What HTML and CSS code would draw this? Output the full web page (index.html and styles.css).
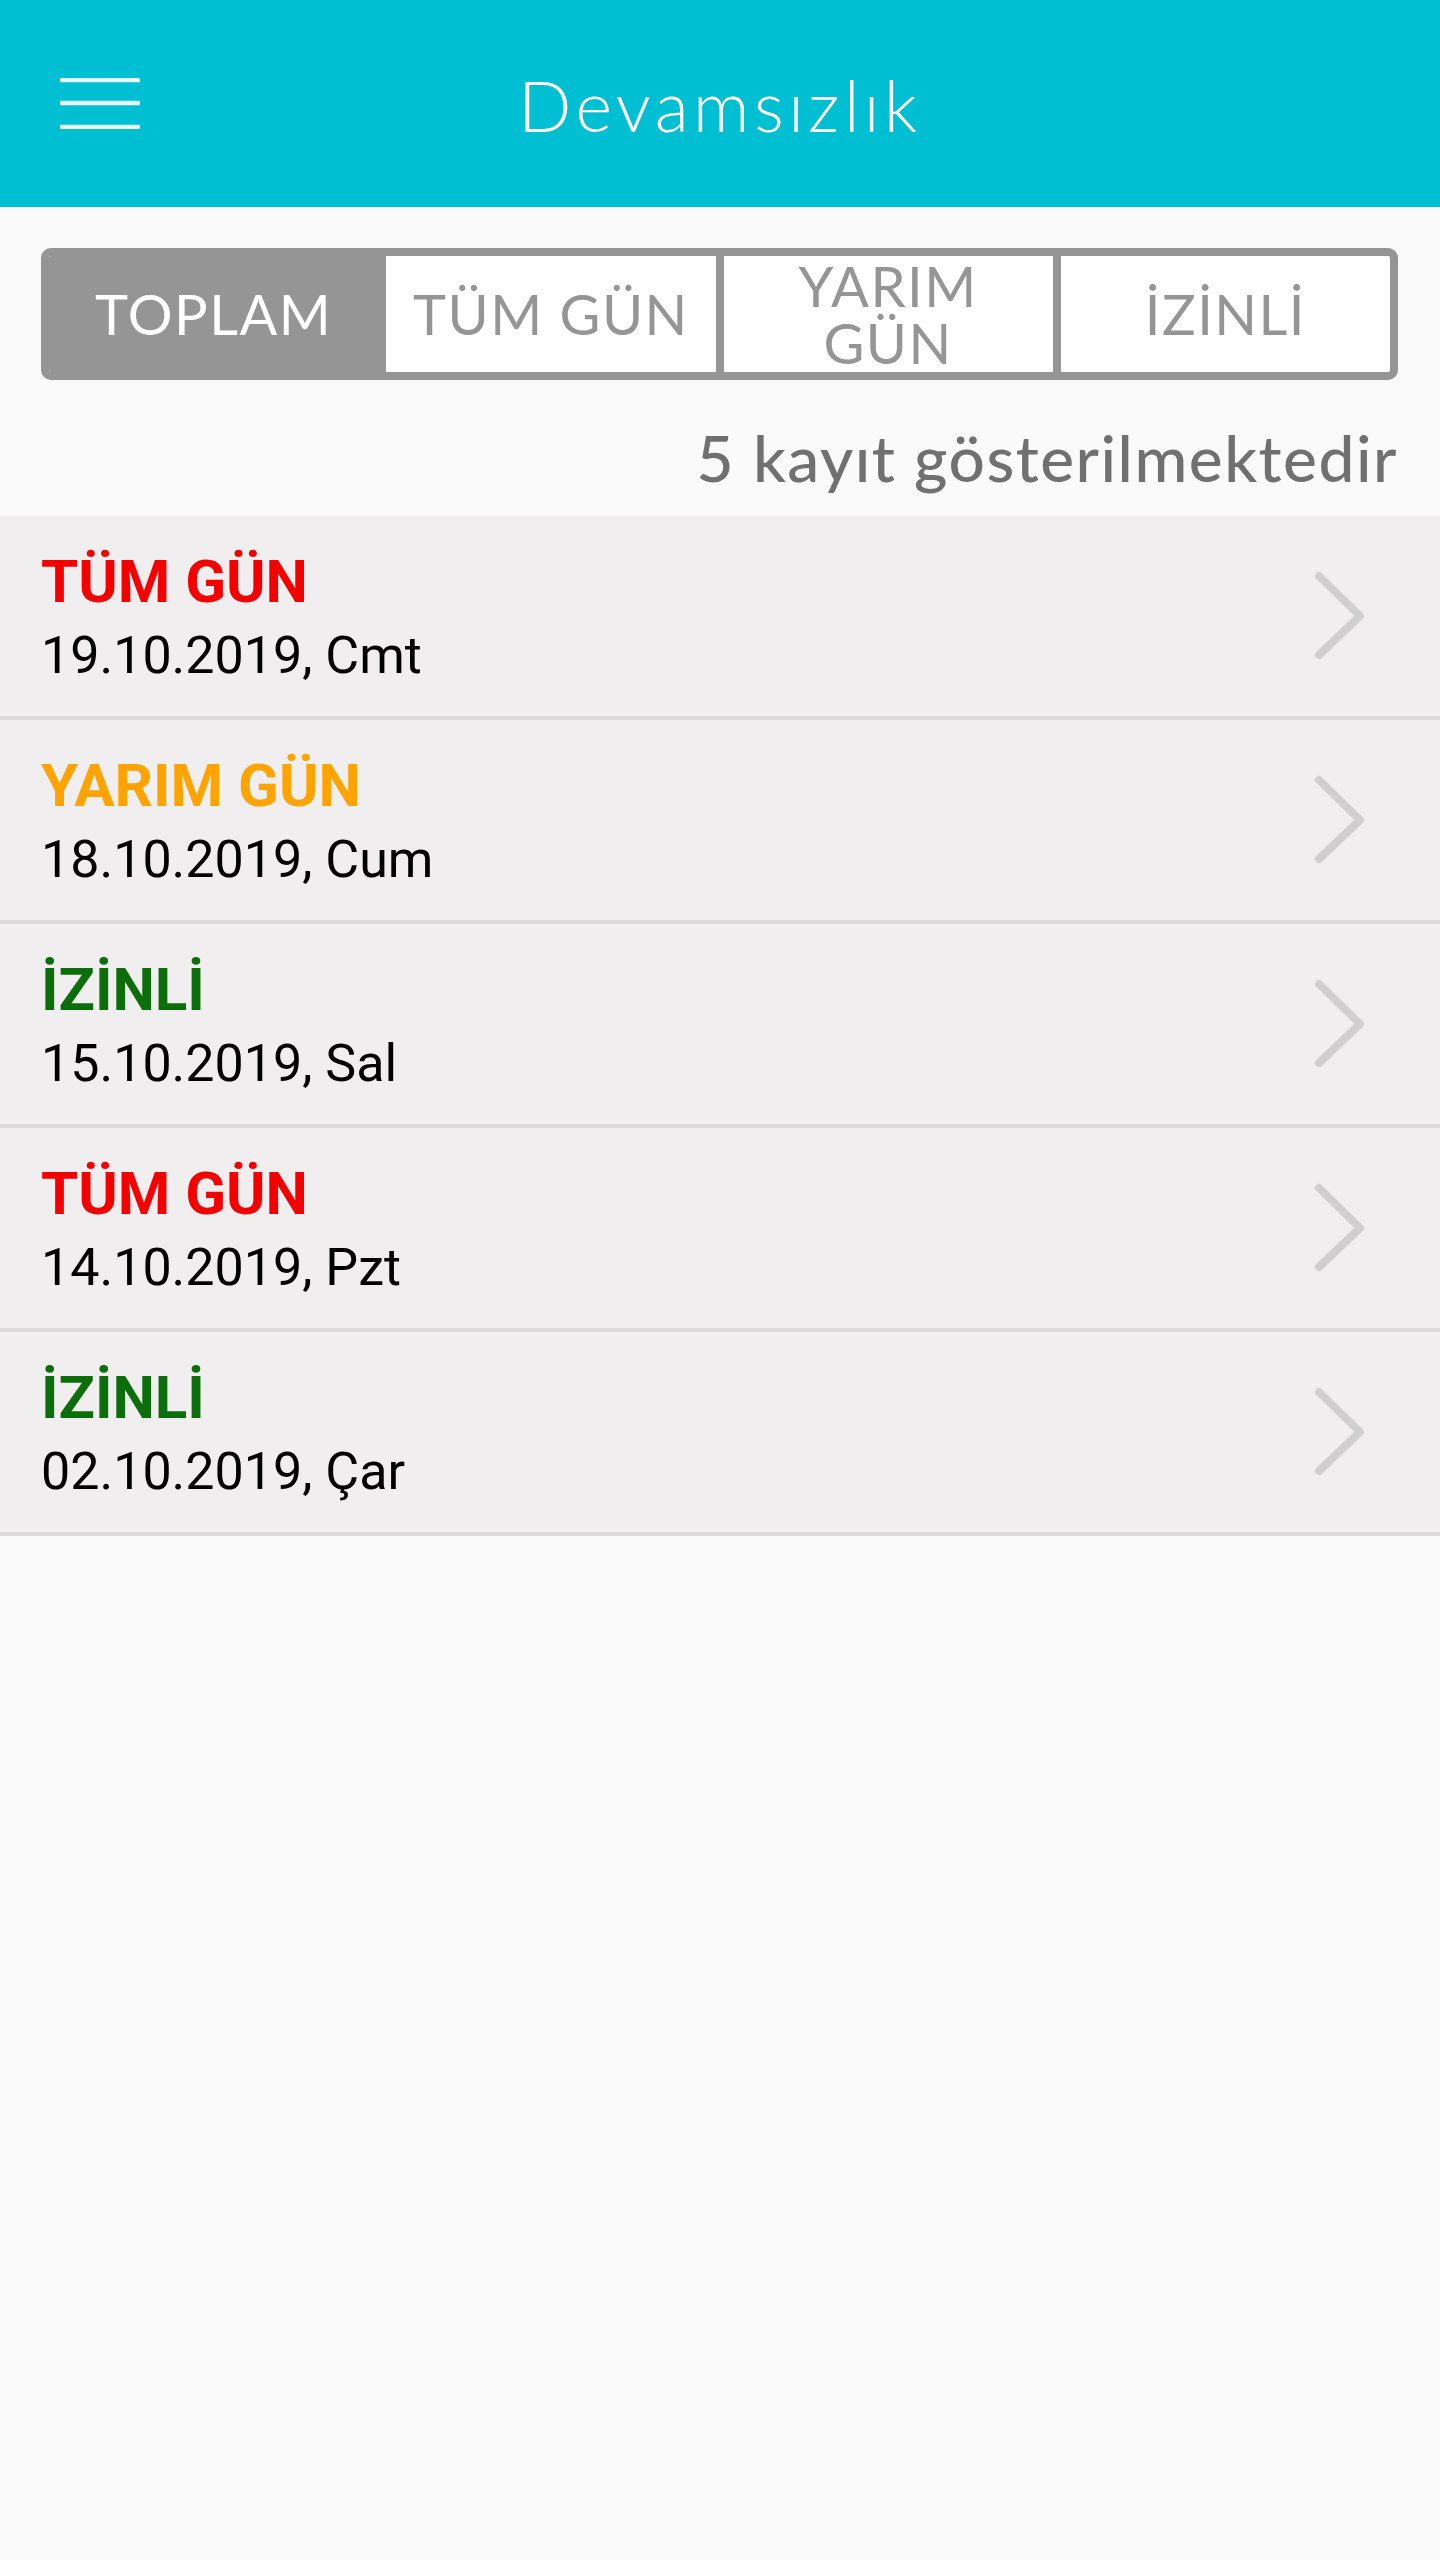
FILE: index.html
```html
<!DOCTYPE html>
<html lang="tr">
<head>
<meta charset="utf-8">
<title>Devamsızlık</title>
<link rel="stylesheet" href="styles.css">
</head>
<body>
<header class="topbar">
  <div class="menu">
    <svg width="80" height="51" viewBox="0 0 80 51"><g stroke="#e6f9fb" stroke-width="4.5"><line x1="0" y1="2" x2="80" y2="2"/><line x1="0" y1="25" x2="80" y2="25"/><line x1="0" y1="49" x2="80" y2="49"/></g></svg>
  </div>
  <h1 class="title">Devamsızlık</h1>
  <div class="spacer"></div>
</header>
<nav class="segments">
  <div class="seg active">TOPLAM</div>
  <div class="seg">TÜM GÜN</div>
  <div class="seg two">YARIM<br>GÜN</div>
  <div class="seg">İZİNLİ</div>
</nav>
<p class="count">5 kayıt gösterilmektedir</p>
<ul class="list">
  <li class="row"><div class="texts"><div class="kind full">TÜM GÜN</div><div class="date">19.10.2019, Cmt</div></div><svg class="chev" width="60" height="100" viewBox="0 0 60 100"><polyline points="10,10 51,50 10,89" fill="none" stroke="#cfcfcf" stroke-width="8" stroke-linecap="round" stroke-linejoin="round"/></svg></li>
  <li class="row"><div class="texts"><div class="kind half">YARIM GÜN</div><div class="date">18.10.2019, Cum</div></div><svg class="chev" width="60" height="100" viewBox="0 0 60 100"><polyline points="10,10 51,50 10,89" fill="none" stroke="#cfcfcf" stroke-width="8" stroke-linecap="round" stroke-linejoin="round"/></svg></li>
  <li class="row"><div class="texts"><div class="kind perm">İZİNLİ</div><div class="date">15.10.2019, Sal</div></div><svg class="chev" width="60" height="100" viewBox="0 0 60 100"><polyline points="10,10 51,50 10,89" fill="none" stroke="#cfcfcf" stroke-width="8" stroke-linecap="round" stroke-linejoin="round"/></svg></li>
  <li class="row"><div class="texts"><div class="kind full">TÜM GÜN</div><div class="date">14.10.2019, Pzt</div></div><svg class="chev" width="60" height="100" viewBox="0 0 60 100"><polyline points="10,10 51,50 10,89" fill="none" stroke="#cfcfcf" stroke-width="8" stroke-linecap="round" stroke-linejoin="round"/></svg></li>
  <li class="row"><div class="texts"><div class="kind perm">İZİNLİ</div><div class="date">02.10.2019, Çar</div></div><svg class="chev" width="60" height="100" viewBox="0 0 60 100"><polyline points="10,10 51,50 10,89" fill="none" stroke="#cfcfcf" stroke-width="8" stroke-linecap="round" stroke-linejoin="round"/></svg></li>
</ul>
</body>
</html>
```
FILE: styles.css
```css
html, body {
  margin: 0;
  padding: 0;
  background: #fafafa;
}
body {
  font-family: Lato, "Open Sans", sans-serif;
  min-height: 2560px;
}
.topbar {
  height: 207px;
  box-sizing: border-box;
  background: #00bfd3;
  display: grid;
  grid-template-columns: 1fr auto 1fr;
  align-items: center;
}
.menu {
  padding-left: 60px;
  display: flex;
  align-items: center;
}
.menu svg { display: block; }
.title {
  margin: 0;
  padding-top: 2px;
  font-weight: 300;
  font-size: 70px;
  line-height: 84px;
  color: #ffffff;
  letter-spacing: 4.5px;
}
.segments {
  margin: 41px 42px 0 41px;
  height: 132px;
  box-sizing: border-box;
  border: 8px solid #959595;
  border-radius: 10px;
  overflow: hidden;
  display: flex;
  background: #ffffff;
}
.seg {
  flex: 1 1 0;
  display: flex;
  align-items: center;
  justify-content: center;
  text-align: center;
  font-size: 56px;
  line-height: 56px;
  color: #959595;
  letter-spacing: 1.5px;
}
.seg.two { line-height: 57px; }
.seg + .seg { border-left: 8px solid #959595; }
.seg.active {
  background: #959595;
  color: #ffffff;
}
.count {
  margin: 40px 42px 20px 0;
  text-align: right;
  font-size: 64px;
  line-height: 76px;
  color: #707070;
  font-weight: 500;
  letter-spacing: 1.5px;
}
.list {
  list-style: none;
  margin: 0;
  padding: 0;
}
.row {
  height: 200px;
  border-bottom: 4px solid #dcdcdc;
  background: #f0eeef;
  display: flex;
  align-items: center;
  padding: 0 71px 0 41px;
}
.texts {
  flex: 1;
  align-self: flex-start;
  padding-top: 30px;
  font-family: Roboto, "Liberation Sans", sans-serif;
}
.kind {
  font-size: 60px;
  line-height: 71px;
  font-weight: 700;
}
.kind.full { color: #f50000; }
.kind.half { color: #ffa300; }
.kind.perm { color: #0b6e0b; }
.date {
  margin-top: 9px;
  font-size: 52px;
  line-height: 60px;
  color: #000000;
}
.chev { display: block; flex: none; }
```
